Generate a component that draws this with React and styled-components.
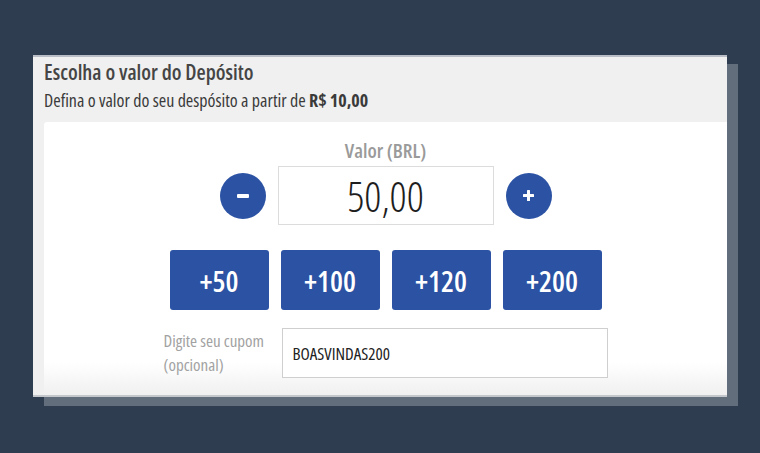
import React, { useState } from "react";
import styled, { createGlobalStyle } from "styled-components";

const GlobalStyle = createGlobalStyle`
  html, body {
    margin: 0;
    padding: 0;
    background: #2e3e50;
    font-family: "Open Sans", "DejaVu Sans Condensed", sans-serif;
    font-stretch: 75%;
  }
`;

const Page = styled.div`
  width: 760px;
  height: 453px;
  padding: 55px 0 0 33px;
  box-sizing: border-box;
  overflow: hidden;
`;

const Panel = styled.div`
  width: 694px;
  height: 342px;
  background: #f0f0f0;
  border-top: 2px solid #b9bec6;
  border-bottom: 2px solid #c4c7cc;
  box-sizing: border-box;
  box-shadow: 11px 9px 0 #626e7c;
  display: flex;
  flex-direction: column;
`;

const Header = styled.div`
  padding: 1px 11px 0;
  height: 65px;
  box-sizing: border-box;
  color: #454545;
  h3 {
    margin: 0;
    font-size: 21px;
    font-weight: 600;
    line-height: 28px;
  }
  p {
    margin: 3px 0 0;
    font-size: 18px;
    line-height: 22px;
    color: #3a3a3a;
    b {
      font-weight: 700;
    }
  }
`;

const Card = styled.div`
  flex: 1;
  margin-left: 11px;
  background: linear-gradient(to bottom, #fff 0, #fff 88%, #f0f0f0 100%);
  border-top-left-radius: 3px;
  display: flex;
  flex-direction: column;
  align-items: center;
  padding-top: 16px;
  box-sizing: border-box;
`;

const AmountLabel = styled.div`
  font-size: 20px;
  font-weight: 600;
  color: #9a9a9a;
  line-height: 26px;
`;

const AmountRow = styled.div`
  display: flex;
  align-items: center;
  gap: 12px;
  margin-top: 2px;
`;

const RoundButton = styled.button`
  width: 46px;
  height: 46px;
  border-radius: 50%;
  border: none;
  background: #2b52a3;
  color: #fff;
  display: flex;
  align-items: center;
  justify-content: center;
  padding: 0;
  cursor: pointer;
  svg {
    display: block;
  }
`;

const AmountInput = styled.input`
  width: 216px;
  height: 59px;
  box-sizing: border-box;
  border: 1px solid #dcdcdc;
  text-align: center;
  font-family: inherit;
  font-stretch: inherit;
  font-size: 42px;
  font-weight: 300;
  color: #1e1e1e;
  outline: none;
`;

const Presets = styled.div`
  display: flex;
  gap: 12px;
  margin-top: 25px;
`;

const PresetButton = styled.button`
  width: 99px;
  height: 60px;
  border: none;
  border-radius: 3px;
  background: #2b52a3;
  color: #fff;
  font-family: inherit;
  font-stretch: inherit;
  font-size: 29px;
  font-weight: 600;
  cursor: pointer;
`;

const CouponRow = styled.div`
  display: flex;
  align-items: center;
  margin-top: 18px;
  width: 444px;
`;

const CouponLabel = styled.label`
  width: 118px;
  font-size: 17px;
  line-height: 24px;
  color: #a2a2a2;
`;

const CouponInput = styled.input`
  width: 326px;
  height: 50px;
  box-sizing: border-box;
  border: 1px solid #cfcfcf;
  padding: 0 10px;
  font-family: inherit;
  font-stretch: inherit;
  font-size: 17px;
  color: #222;
  outline: none;
`;

const MinusIcon = () => (
  <svg width="12" height="12" viewBox="0 0 12 12">
    <rect x="0" y="4" width="12" height="4" rx="1" fill="currentColor" />
  </svg>
);

const PlusIcon = () => (
  <svg width="11" height="11" viewBox="0 0 11 11">
    <rect x="0" y="4" width="11" height="3" rx="0.5" fill="currentColor" />
    <rect x="4" y="0" width="3" height="11" rx="0.5" fill="currentColor" />
  </svg>
);

const presets = [50, 100, 120, 200];

export default function App() {
  const [amount, setAmount] = useState(50);
  const [coupon, setCoupon] = useState("BOASVINDAS200");

  const format = (v) => v.toFixed(2).replace(".", ",");

  return (
    <>
      <GlobalStyle />
      <Page>
        <Panel>
          <Header>
            <h3>Escolha o valor do Depósito</h3>
            <p>
              Defina o valor do seu despósito a partir de <b>R$ 10,00</b>
            </p>
          </Header>
          <Card>
            <AmountLabel>Valor (BRL)</AmountLabel>
            <AmountRow>
              <RoundButton onClick={() => setAmount((a) => Math.max(10, a - 10))}>
                <MinusIcon />
              </RoundButton>
              <AmountInput value={format(amount)} readOnly />
              <RoundButton onClick={() => setAmount((a) => a + 10)}>
                <PlusIcon />
              </RoundButton>
            </AmountRow>
            <Presets>
              {presets.map((p) => (
                <PresetButton key={p} onClick={() => setAmount((a) => a + p)}>
                  +{p}
                </PresetButton>
              ))}
            </Presets>
            <CouponRow>
              <CouponLabel>
                Digite seu cupom
                <br />
                (opcional)
              </CouponLabel>
              <CouponInput value={coupon} onChange={(e) => setCoupon(e.target.value)} />
            </CouponRow>
          </Card>
        </Panel>
      </Page>
    </>
  );
}
